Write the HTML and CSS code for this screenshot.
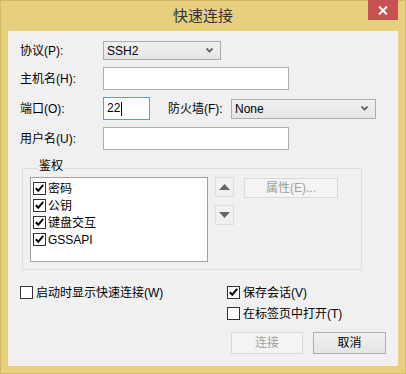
FILE: index.html
```html
<!DOCTYPE html>
<html lang="zh-CN">

<head>
    <meta charset="UTF-8" />
    <meta name="viewport" content="width=device-width, initial-scale=1.0" />
    <title>快速连接</title>
    <link rel="stylesheet" href="styles.css">
</head>

<body>
    <div class="window">
        <div class="titlebar">
            <span></span>
            <span class="title">快速连接</span>
            <span class="close">
                <svg width="10" height="9" viewBox="0 0 10 9">
                    <path d="M1 0.5 L9 8.5 M9 0.5 L1 8.5" stroke="#fff" stroke-width="2" />
                </svg>
            </span>
        </div>

        <div class="client">
            <div class="form">
                <label class="lbl">协议(P):</label>
                <div class="row">
                    <div class="combo combo-proto">
                        <span>SSH2</span>
                        <svg class="chev" width="7" height="5" viewBox="0 0 7 5">
                            <path d="M0.5 0.5 L3.5 3.5 L6.5 0.5" fill="none" stroke="#555" stroke-width="1.6" />
                        </svg>
                    </div>
                </div>

                <label class="lbl">主机名(H):</label>
                <div class="row">
                    <div class="text wide"></div>
                </div>

                <label class="lbl">端口(O):</label>
                <div class="row">
                    <div class="text port focus">22<span class="caret"></span></div>
                    <label class="lbl fw">防火墙(F):</label>
                    <div class="combo combo-fw">
                        <span>None</span>
                        <svg class="chev" width="7" height="5" viewBox="0 0 7 5">
                            <path d="M0.5 0.5 L3.5 3.5 L6.5 0.5" fill="none" stroke="#555" stroke-width="1.6" />
                        </svg>
                    </div>
                </div>

                <label class="lbl">用户名(U):</label>
                <div class="row">
                    <div class="text wide"></div>
                </div>
            </div>

            <fieldset class="group">
                <legend>鉴权</legend>
                <div class="group-body">
                    <div class="listbox">
                        <div class="item"><span class="check on"></span>密码</div>
                        <div class="item"><span class="check on"></span>公钥</div>
                        <div class="item"><span class="check on"></span>键盘交互</div>
                        <div class="item"><span class="check on"></span>GSSAPI</div>
                    </div>
                    <div class="arrows">
                        <div class="btn-arrow">
                            <svg width="11" height="6" viewBox="0 0 11 6"><path d="M0 6 L5.5 0 L11 6 Z" fill="#666" /></svg>
                        </div>
                        <div class="btn-arrow">
                            <svg width="11" height="6" viewBox="0 0 11 6"><path d="M0 0 L5.5 6 L11 0 Z" fill="#666" /></svg>
                        </div>
                    </div>
                    <div class="btn btn-props disabled">属性(E)...</div>
                </div>
            </fieldset>

            <div class="bottom">
                <div class="opt"><span class="check"></span>启动时显示快速连接(W)</div>
                <div class="right">
                    <div class="opt"><span class="check on"></span>保存会话(V)</div>
                    <div class="opt"><span class="check"></span>在标签页中打开(T)</div>
                    <div class="buttons">
                        <div class="btn disabled">连接</div>
                        <div class="btn">取消</div>
                    </div>
                </div>
            </div>
        </div>
    </div>
</body>

</html>
```

FILE: styles.css
```css
body {
    margin: 0;
    background: #e6cf7f;
    font-family: 'Liberation Sans', 'Noto Sans CJK SC', sans-serif;
    font-size: 12px;
    color: #000;
}

.window {
    width: 406px;
    height: 374px;
    box-sizing: border-box;
    background: #e6cf7f;
    border: 1px solid #d4b965;
    padding: 0 7px 7px;
}

.titlebar {
    height: 30px;
    display: grid;
    grid-template-columns: 1fr auto 1fr;
    align-items: start;
}

.title {
    font-size: 15px;
    line-height: 30px;
    color: #333;
}

.close {
    justify-self: end;
    width: 30px;
    height: 20px;
    background: #c75050;
    display: flex;
    align-items: center;
    justify-content: center;
    margin-top: -1px;
}

.client {
    height: 335px;
    box-sizing: border-box;
    background: #f0f0f0;
    border: 1px solid #f6f1e0;
    padding: 9px 11px 0;
}

/* top form */
.form {
    display: grid;
    grid-template-columns: 83px 1fr;
    grid-template-rows: 19px 23px 23px 23px;
    row-gap: 7px;
    align-items: center;
}

.lbl {
    line-height: 16px;
    white-space: nowrap;
}

.row {
    display: flex;
    align-items: center;
    height: 100%;
}

.combo {
    box-sizing: border-box;
    height: 19px;
    border: 1px solid #acacac;
    background: linear-gradient(#f0f0f0, #e5e5e5);
    display: flex;
    align-items: center;
    justify-content: space-between;
    padding: 0 7px 0 3px;
    line-height: 16px;
}

.combo-proto {
    width: 118px;
}

.combo-fw {
    width: 145px;
    height: 20px;
}

.text {
    box-sizing: border-box;
    height: 23px;
    border: 1px solid #abadb3;
    background: #fff;
    padding: 0 3px;
    line-height: 21px;
    display: flex;
    align-items: center;
}

.wide {
    width: 186px;
}

.port {
    width: 47px;
}

.focus {
    border-color: #569de5;
}

.caret {
    display: inline-block;
    width: 1px;
    height: 14px;
    background: #000;
    margin-left: 1px;
}

.fw {
    margin-left: 18px;
    width: 63px;
}

/* auth group */
.group {
    margin: 9px 24px 0 2px;
    padding: 0 0 7px 7px;
    border: 1px solid #dcdcdc;
    min-width: 0;
}

.group legend {
    margin-left: 8px;
    padding: 0 1px 4px;
    line-height: 14px;
}

.group-body {
    display: flex;
    align-items: flex-start;
}

.listbox {
    box-sizing: border-box;
    width: 178px;
    height: 85px;
    border: 1px solid #a0a0a0;
    background: #fff;
    padding: 2px 0 0 2px;
}

.item {
    height: 17px;
    display: flex;
    align-items: center;
    line-height: 16px;
}

.check {
    box-sizing: border-box;
    width: 13px;
    height: 13px;
    border: 1px solid #333;
    background: #fff;
    margin-right: 2px;
    flex-shrink: 0;
}

.check.on {
    background: #fff url("data:image/svg+xml,%3Csvg xmlns='http://www.w3.org/2000/svg' width='11' height='11' viewBox='0 0 11 11'%3E%3Cpath d='M1.8 5.2 L4.3 7.8 L9.2 1.8' fill='none' stroke='%23000' stroke-width='2'/%3E%3C/svg%3E") no-repeat center;
}

.arrows {
    margin-left: 7px;
    display: flex;
    flex-direction: column;
    gap: 8px;
}

.btn-arrow {
    box-sizing: border-box;
    width: 19px;
    height: 20px;
    border: 1px solid #dcdcdc;
    background: #f0f0f0;
    display: flex;
    align-items: center;
    justify-content: center;
}

.btn {
    box-sizing: border-box;
    width: 73px;
    height: 22px;
    border: 1px solid #adadad;
    background: linear-gradient(#f0f0f0, #e5e5e5);
    display: flex;
    align-items: center;
    justify-content: center;
    line-height: 16px;
}

.btn.disabled {
    border-color: #d9d9d9;
    background: #f4f4f4;
    color: #a0a0a0;
}

.btn-props {
    width: 94px;
    height: 20px;
    margin: 1px 0 0 10px;
}

/* bottom area */
.bottom {
    margin-top: 12px;
    display: grid;
    grid-template-columns: 207px 1fr;
}

.opt {
    height: 21px;
    display: flex;
    align-items: center;
    line-height: 16px;
}

.opt .check {
    margin-right: 3px;
}

.buttons {
    margin-top: 8px;
    display: flex;
    justify-content: flex-end;
    gap: 10px;
}

.buttons .btn:first-child {
    width: 72px;
}
```
